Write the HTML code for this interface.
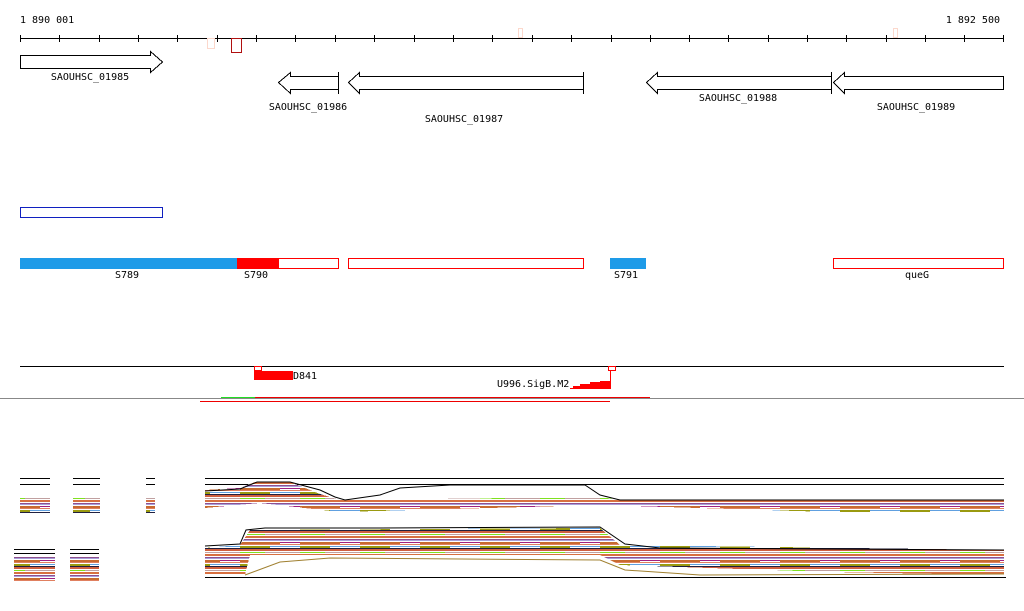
<!DOCTYPE html>
<html><head><meta charset="utf-8"><style>
html,body{margin:0;padding:0;background:#fff;width:1024px;height:611px;overflow:hidden}
svg{display:block}
text{font-family:"DejaVu Sans Mono","Liberation Mono",monospace;font-size:10px;fill:#000}
</style></head><body>
<svg width="1024" height="611" viewBox="0 0 1024 611" xmlns="http://www.w3.org/2000/svg" shape-rendering="crispEdges">
<defs>
<pattern id="st" width="60" height="18" patternUnits="userSpaceOnUse">
<rect width="60" height="18" fill="#fff"/>
<rect y="0" width="60" height="1" fill="#a8a0d8"/>
<rect y="2" width="40" height="2" fill="#c86a30"/>
<rect x="40" y="2" width="20" height="1" fill="#a02080"/>
<rect y="4" width="60" height="1" fill="#e08060"/>
<rect y="6" width="30" height="2" fill="#9a9a10"/>
<rect x="30" y="6" width="30" height="1" fill="#60a0e0"/>
<rect y="8" width="60" height="1" fill="#202040"/>
<rect y="9" width="60" height="2" fill="#d06040"/>
<rect y="12" width="25" height="1" fill="#80e020"/>
<rect x="25" y="12" width="35" height="1" fill="#c0a0a0"/>
<rect y="14" width="60" height="2" fill="#d87040"/>
<rect y="17" width="60" height="1" fill="#905090"/>
</pattern>
</defs>
<text x="20" y="23">1 890 001</text>
<text x="1000" y="23" text-anchor="end">1 892 500</text>
<line x1="20" y1="38.5" x2="1004" y2="38.5" stroke="#000"/>
<g stroke="#000">
<line x1="20.5" y1="35" x2="20.5" y2="42"/><line x1="59.5" y1="35" x2="59.5" y2="42"/><line x1="99.5" y1="35" x2="99.5" y2="42"/><line x1="138.5" y1="35" x2="138.5" y2="42"/><line x1="177.5" y1="35" x2="177.5" y2="42"/><line x1="217.5" y1="35" x2="217.5" y2="42"/><line x1="256.5" y1="35" x2="256.5" y2="42"/><line x1="295.5" y1="35" x2="295.5" y2="42"/><line x1="335.5" y1="35" x2="335.5" y2="42"/><line x1="374.5" y1="35" x2="374.5" y2="42"/><line x1="414.5" y1="35" x2="414.5" y2="42"/><line x1="453.5" y1="35" x2="453.5" y2="42"/><line x1="492.5" y1="35" x2="492.5" y2="42"/><line x1="532.5" y1="35" x2="532.5" y2="42"/><line x1="571.5" y1="35" x2="571.5" y2="42"/><line x1="611.5" y1="35" x2="611.5" y2="42"/><line x1="650.5" y1="35" x2="650.5" y2="42"/><line x1="689.5" y1="35" x2="689.5" y2="42"/><line x1="728.5" y1="35" x2="728.5" y2="42"/><line x1="768.5" y1="35" x2="768.5" y2="42"/><line x1="807.5" y1="35" x2="807.5" y2="42"/><line x1="846.5" y1="35" x2="846.5" y2="42"/><line x1="886.5" y1="35" x2="886.5" y2="42"/><line x1="925.5" y1="35" x2="925.5" y2="42"/><line x1="964.5" y1="35" x2="964.5" y2="42"/><line x1="1003.5" y1="35" x2="1003.5" y2="42"/>
</g>
<rect x="207.5" y="38.5" width="7" height="10" fill="none" stroke="#fcd8cc"/>
<rect x="231.5" y="38.5" width="10" height="14" fill="none" stroke="#b01010"/>
<rect x="518.5" y="28.5" width="4" height="9" fill="none" stroke="#fcd8cc"/>
<rect x="893.5" y="28.5" width="4" height="9" fill="none" stroke="#fcd8cc"/>
<g fill="#fff" stroke="#000">
<path d="M20.5 55.5H150.5V51.5L162.5 62L150.5 72.5V68.5H20.5Z"/>
<path d="M338.5 76.5H290.5V72.5L278.5 82.5L290.5 93.5V89.5H338.5"/>
<line x1="338.5" y1="72" x2="338.5" y2="94"/>
<path d="M583.5 76.5H359.5V72.5L348.5 82.5L359.5 93.5V89.5H583.5"/>
<line x1="583.5" y1="72" x2="583.5" y2="94"/>
<path d="M831.5 76.5H657.5V72.5L646.5 82.5L657.5 93.5V89.5H831.5"/>
<line x1="831.5" y1="72" x2="831.5" y2="94"/>
<path d="M1003.5 76.5H844.5V72.5L833.5 82.5L844.5 93.5V89.5H1003.5Z"/>
</g>
<text x="90" y="80" text-anchor="middle">SAOUHSC_01985</text>
<text x="308" y="110" text-anchor="middle">SAOUHSC_01986</text>
<text x="464" y="122" text-anchor="middle">SAOUHSC_01987</text>
<text x="738" y="101" text-anchor="middle">SAOUHSC_01988</text>
<text x="916" y="110" text-anchor="middle">SAOUHSC_01989</text>
<rect x="20.5" y="207.5" width="142" height="10" fill="none" stroke="#1020c0"/>
<rect x="20" y="258" width="217" height="11" fill="#1e9be8"/>
<rect x="237" y="258" width="41" height="11" fill="#f00"/>
<rect x="278.5" y="258.5" width="60" height="10" fill="none" stroke="#f00"/>
<rect x="348.5" y="258.5" width="235" height="10" fill="none" stroke="#f00"/>
<rect x="610" y="258" width="36" height="11" fill="#1e9be8"/>
<rect x="833.5" y="258.5" width="170" height="10" fill="none" stroke="#f00"/>
<text x="127" y="278" text-anchor="middle">S789</text>
<text x="256" y="278" text-anchor="middle">S790</text>
<text x="626" y="278" text-anchor="middle">S791</text>
<text x="917" y="278" text-anchor="middle">queG</text>
<line x1="20" y1="366.5" x2="1004" y2="366.5" stroke="#000"/>
<rect x="254" y="371" width="39" height="9" fill="#f00"/>
<rect x="254.5" y="366.5" width="7" height="4" fill="#fff" stroke="#f00"/>
<text x="293" y="379">D841</text>
<text x="497" y="387">U996.SigB.M2</text>
<path d="M570 389H610V381L600 381V382L590 382V384L580 384V386L573 386V388L570 388Z" fill="#f00"/>
<line x1="610.5" y1="369" x2="610.5" y2="389" stroke="#f00"/>
<rect x="608.5" y="366.5" width="7" height="4" fill="#fff" stroke="#f00"/>
<line x1="0" y1="398.5" x2="1024" y2="398.5" stroke="#888"/>
<line x1="221" y1="397.5" x2="255" y2="397.5" stroke="#2d2"/>
<line x1="255" y1="397.5" x2="650" y2="397.5" stroke="#e00"/>
<line x1="200" y1="401.5" x2="610" y2="401.5" stroke="#e00"/>
<g stroke="#000">
<line x1="20" y1="478.5" x2="50" y2="478.5"/><line x1="20" y1="484.5" x2="50" y2="484.5"/>
<line x1="73" y1="478.5" x2="100" y2="478.5"/><line x1="73" y1="484.5" x2="100" y2="484.5"/>
<line x1="146" y1="478.5" x2="155" y2="478.5"/><line x1="146" y1="484.5" x2="155" y2="484.5"/>
</g>
<rect x="20" y="498" width="30" height="15" fill="url(#st)"/>
<rect x="73" y="498" width="27" height="15" fill="url(#st)"/>
<rect x="146" y="498" width="9" height="15" fill="url(#st)"/>
<g stroke="#000"><line x1="14" y1="549.5" x2="55" y2="549.5"/><line x1="70" y1="549.5" x2="99" y2="549.5"/><line x1="14" y1="553.5" x2="55" y2="553.5"/><line x1="70" y1="553.5" x2="99" y2="553.5"/></g>
<rect x="14" y="557" width="41" height="24" fill="url(#st)"/>
<rect x="70" y="557" width="29" height="24" fill="url(#st)"/>
<g stroke="#000">
<line x1="205" y1="478.5" x2="1004" y2="478.5"/>
<line x1="205" y1="484.5" x2="1004" y2="484.5"/>
<line x1="205" y1="577.5" x2="1006" y2="577.5"/>
</g>
<path d="M205 490L240 488L255 482L290 482L320 494L340 500L600 497L620 500L1004 500L1004 512L830 512L600 505L340 512L260 503L205 508Z" fill="url(#st)"/>
<path d="M205 548L240 545L250 530L600 528L620 545L1004 550L1004 575L830 572L620 565L600 555L250 555L245 575L205 575Z" fill="url(#st)"/>
<polyline points="205,491 240,489 257,482 290,482 320,490 335,497 345,500 380,495 400,488 450,485 480,485 500,485 530,485 560,485 585,485 600,495 620,500 1004,500" fill="none" stroke="#000" shape-rendering="auto"/>
<polyline points="205,546 240,544 246,530 265,528 380,528 600,527 625,544 660,548 1004,550" fill="none" stroke="#000" shape-rendering="auto"/>
<polyline points="245,575 280,562 330,558 600,560 625,570 700,575 1004,574" fill="none" stroke="#a08030" shape-rendering="auto"/>
</svg>
</body></html>
